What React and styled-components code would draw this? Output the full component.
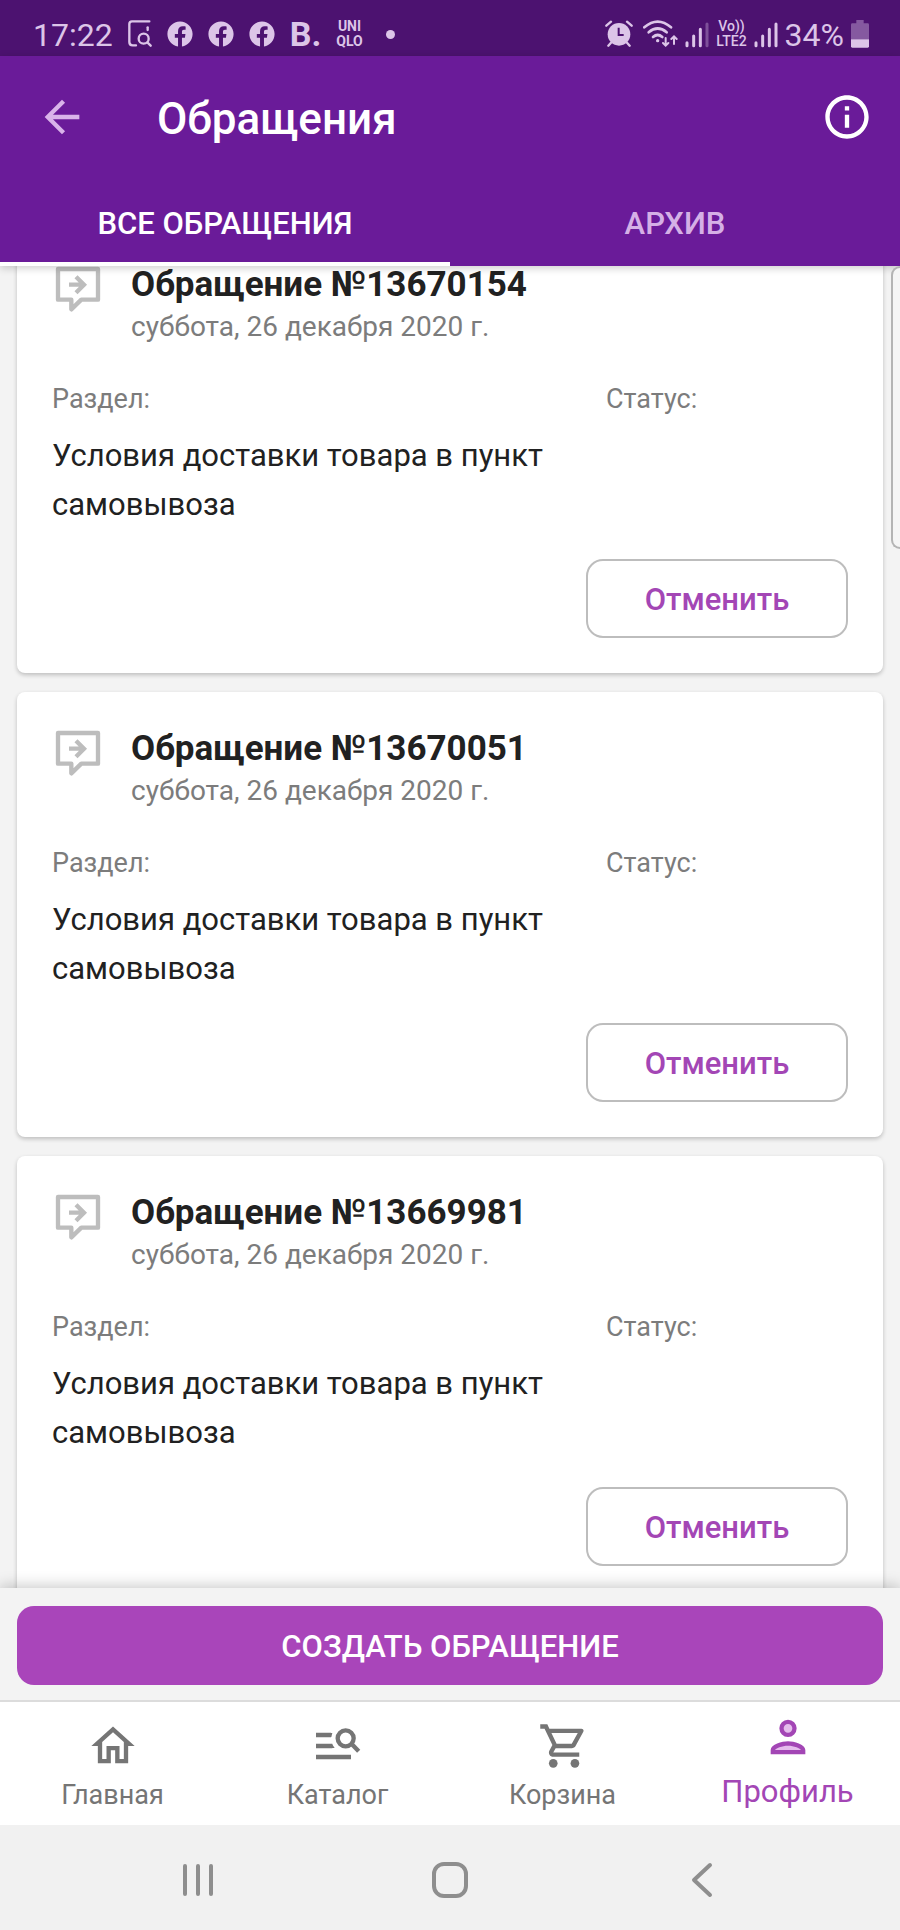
import React, { useLayoutEffect, useRef } from 'react';
import styled, { createGlobalStyle } from 'styled-components';
import { FaFacebook } from 'react-icons/fa';
import { MdArrowBack, MdOutlineInfo } from 'react-icons/md';

const requests = [
    { id: 13670154, date: 'суббота, 26 декабря 2020 г.', section: 'Условия доставки товара в пункт самовывоза' },
    { id: 13670051, date: 'суббота, 26 декабря 2020 г.', section: 'Условия доставки товара в пункт самовывоза' },
    { id: 13669981, date: 'суббота, 26 декабря 2020 г.', section: 'Условия доставки товара в пункт самовывоза' }
];

const SearchPageIcon = () => (
    <svg width="24" height="28" viewBox="0 0 72 84" fill="none" stroke="currentColor" strokeWidth="7" strokeLinecap="round">
        <path d="M64 4H12Q4 4 4 12V66Q4 76 14 76H24" />
        <path d="M59 22V30" />
        <circle cx="47" cy="56" r="15" />
        <path d="M58 67L68 77" />
    </svg>
);

const AlarmIcon = () => (
    <svg width="31" height="28" viewBox="0 0 93 84">
        <circle cx="42" cy="43" r="34" fill="currentColor" />
        <path d="M4 17L18 5M80 17L66 5M18 68L10 77M66 68L74 77" stroke="currentColor" strokeWidth="7" strokeLinecap="round" />
        <path d="M41 23V45H56" fill="none" stroke="#4c1270" strokeWidth="6" />
    </svg>
);

const WifiIcon = () => (
    <svg width="35" height="28" viewBox="0 0 105 84" fill="none" stroke="currentColor" strokeWidth="8" strokeLinecap="round">
        <path d="M4 22Q44 -12 84 22" />
        <path d="M17 37Q44 14 71 37" />
        <path d="M30 51Q44 39 58 51" />
        <circle cx="44" cy="62" r="3" fill="currentColor" strokeWidth="4" />
        <path d="M68 54V76M60 69L68 77L76 69M93 72V50M85 57L93 49L101 57" strokeWidth="6" />
    </svg>
);

const SignalIcon = ({ weak }) => (
    <svg width="24" height="28" viewBox="0 0 72 84" stroke="currentColor" strokeWidth="9" strokeLinecap="round">
        <path d="M6 68V77M26 48V77M46 28V77" />
        <path d="M66 12V77" opacity={weak ? 0.35 : 1} />
    </svg>
);

const BatteryIcon = () => (
    <svg width="18" height="28" viewBox="0 0 54 84" fill="currentColor">
        <path d="M16 0H38V10H50Q54 10 54 14V58H0V14Q0 10 4 10H16Z" opacity="0.4" />
        <path d="M0 58H54V79Q54 83 50 83H4Q0 83 0 79Z" />
    </svg>
);

const RequestIcon = () => (
    <svg width="52" height="52" viewBox="-12 -12 156 156" fill="none" stroke="#bdbdbd" strokeWidth="13" strokeLinecap="round" strokeLinejoin="round">
        <path d="M6 6H126V98H76L46 127V98H6Z" />
        <path d="M39 53H84M60 29L84 53L60 77" strokeLinecap="butt" strokeLinejoin="miter" />
    </svg>
);

const HomeIcon = () => (
    <svg width="52" height="52" viewBox="0 0 24 24" fill="currentColor">
        <path d="M12 5.69l5 4.5V18h-2v-6H9v6H7v-7.81l5-4.5M12 3L2 12h3v8h6v-6h2v6h6v-8h3L12 3z" />
    </svg>
);

const CatalogIcon = () => (
    <svg width="52" height="52" viewBox="0 0 156 156" fill="none" stroke="currentColor" strokeWidth="13">
        <path d="M12 45H57M12 78H61M12 111H117" />
        <path d="M57 39H61L58 51H55ZM60 72L68 84H58Z" fill="currentColor" stroke="none" />
        <circle cx="101" cy="55" r="24" />
        <path d="M117 70L140 94" />
    </svg>
);

const CartIcon = () => (
    <svg width="52" height="52" viewBox="-0.5 0 24 24" fill="currentColor">
        <path d="M15.55 13c.75 0 1.41-.41 1.75-1.03l3.58-6.49A.996.996 0 0020.01 4H5.21l-.94-2H1v2h2l3.6 7.59-1.35 2.44C4.52 15.37 5.48 17 7 17h12v-2H7l1.1-2h7.45zM6.16 6h12.15l-2.76 5H8.53L6.16 6z" />
        <circle cx="7" cy="20" r="2" />
        <circle cx="17" cy="20" r="2" />
    </svg>
);

const ProfileIcon = () => (
    <svg width="52" height="52" viewBox="0 0 24 24" fill="currentColor">
        <circle cx="12" cy="8" r="3" fill="#e5bdec" stroke="currentColor" strokeWidth="2" />
        <path d="M5 18.9V18C5 16.3 9.3 15 12 15S19 16.3 19 18V18.9Z" fill="#e5bdec" />
        <path d="M12 14c-2.67 0-8 1.34-8 4v2h16v-2c0-2.66-5.33-4-8-4zm6 4H6c.2-.72 3.3-2 6-2s5.8 1.29 6 2z" />
    </svg>
);

const RecentsIcon = () => (
    <svg width="36" height="36" viewBox="0 0 36 36" stroke="currentColor" strokeWidth="4" strokeLinecap="round">
        <path d="M5 4V32M18 4V32M31 4V32" />
    </svg>
);

const SquareIcon = () => (
    <svg width="36" height="36" viewBox="0 0 36 36" fill="none" stroke="currentColor" strokeWidth="4">
        <rect x="2" y="2" width="32" height="32" rx="10" />
    </svg>
);

const ChevronIcon = () => (
    <svg width="36" height="36" viewBox="0 0 36 36" fill="none" stroke="currentColor" strokeWidth="4" strokeLinecap="round" strokeLinejoin="round">
        <path d="M26 3L10 18L26 33" />
    </svg>
);

const navItems = [
    { label: 'Главная', icon: <HomeIcon /> },
    { label: 'Каталог', icon: <CatalogIcon /> },
    { label: 'Корзина', icon: <CartIcon /> },
    { label: 'Профиль', icon: <ProfileIcon />, active: true }
];

const RequestCard = ({ request }) => (
    <Card>
        <CardHeader>
            <RequestIcon />
            <CardHeading>
                <CardTitle>Обращение №{request.id}</CardTitle>
                <CardDate>{request.date}</CardDate>
            </CardHeading>
        </CardHeader>
        <Details>
            <div>
                <Label>Раздел:</Label>
                <Value>{request.section}</Value>
            </div>
            <Label>Статус:</Label>
        </Details>
        <CancelButton type="button">Отменить</CancelButton>
    </Card>
);

const App = () => {
    const listRef = useRef(null);

    // the list opens slightly scrolled, under the tabs
    useLayoutEffect(() => {
        listRef.current.scrollTop = 57;
    }, []);

    return (
        <Screen>
            <GlobalStyle />
            <StatusBar>
                <StatusGroup $gap={15}>
                    <Clock>17:22</Clock>
                    <SearchPageIcon />
                    <FaFacebook size={26} />
                    <FaFacebook size={26} />
                    <FaFacebook size={26} />
                    <Booking>B.</Booking>
                    <Uniqlo>
                        <span>UNI</span>
                        <span>QLO</span>
                    </Uniqlo>
                    <Dot />
                </StatusGroup>
                <StatusGroup $gap={7}>
                    <AlarmIcon />
                    <WifiIcon />
                    <SignalIcon weak />
                    <Volte>
                        <span>Vo))</span>
                        <span>LTE2</span>
                    </Volte>
                    <SignalIcon />
                    <Clock>34%</Clock>
                    <BatteryIcon />
                </StatusGroup>
            </StatusBar>
            <Header>
                <Toolbar>
                    <IconButton type="button" aria-label="Назад" $faded>
                        <MdArrowBack size={52} />
                    </IconButton>
                    <Title>Обращения</Title>
                    <IconButton type="button" aria-label="Информация">
                        <MdOutlineInfo size={52} />
                    </IconButton>
                </Toolbar>
                <Tabs role="tablist">
                    <Tab type="button" role="tab" aria-selected="true" $active>ВСЕ ОБРАЩЕНИЯ</Tab>
                    <Tab type="button" role="tab" aria-selected="false">АРХИВ</Tab>
                </Tabs>
                <EdgeHandle />
            </Header>
            <List ref={listRef}>
                {
                    requests.map(request =>
                        <RequestCard key={request.id} request={request} />
                    )
                }
            </List>
            <Footer>
                <CreateButton type="button">СОЗДАТЬ ОБРАЩЕНИЕ</CreateButton>
            </Footer>
            <BottomNav>
                {
                    navItems.map(item =>
                        <NavLink key={item.label} href="#" $active={item.active}>
                            {item.icon}
                            <span>{item.label}</span>
                        </NavLink>
                    )
                }
            </BottomNav>
            <SystemNav>
                <SystemButton type="button" aria-label="Недавние"><RecentsIcon /></SystemButton>
                <SystemButton type="button" aria-label="Домой"><SquareIcon /></SystemButton>
                <SystemButton type="button" aria-label="Назад"><ChevronIcon /></SystemButton>
            </SystemNav>
        </Screen>
    )
}

export default App;


const GlobalStyle = createGlobalStyle`
* {
    box-sizing: border-box;
}
body {
    margin: 0;
    background: #f3f3f3;
    font-family: Roboto, sans-serif;
}
button {
    padding: 0;
    border: 0;
    background: none;
    color: inherit;
    font-family: inherit;
    cursor: pointer;
}
svg {
    display: block;
    flex: none;
}
`

const Screen = styled.div`
    height: 100vh;
    display: flex;
    flex-direction: column;
    overflow: hidden;
`

const StatusBar = styled.div`
    flex: none;
    height: 56px;
    padding: 12px 31px 0 33px;
    display: flex;
    justify-content: space-between;
    background: #4c1270;
    color: #dcc5e8;
`

const StatusGroup = styled.div`
    display: flex;
    align-items: center;
    gap: ${({ $gap }) => $gap}px;
`

const Clock = styled.span`
    padding-top: 2px;
    font-size: 32px;
    line-height: 42px;
`

const Booking = styled.span`
    font-size: 34px;
    line-height: 42px;
    font-weight: 700;
`

const Uniqlo = styled.span`
    display: flex;
    flex-direction: column;
    align-items: center;
    font-size: 14px;
    line-height: 15px;
    font-weight: 700;
`

const Volte = styled(Uniqlo)`
    font-weight: 500;
`

const Dot = styled.span`
    width: 9px;
    height: 9px;
    margin-left: 8px;
    border-radius: 50%;
    background: currentColor;
`

const Header = styled.header`
    position: relative;
    z-index: 1;
    flex: none;
    background: #6a1b99;
    color: #fff;
    box-shadow: 0 2px 8px rgba(0, 0, 0, 0.2);
`

const Toolbar = styled.div`
    height: 122px;
    padding: 0 27px 0 36px;
    display: flex;
    align-items: center;
`

const IconButton = styled.button`
    color: ${({ $faded }) => $faded ? '#d9b3ea' : '#fff'};
`

const Title = styled.h1`
    flex: 1;
    margin: 0 0 0 69px;
    padding-top: 4px;
    font-size: 44px;
    line-height: 52px;
    font-weight: 500;
`

const Tabs = styled.div`
    display: grid;
    grid-template-columns: 1fr 1fr;
`

const Tab = styled.button`
    height: 88px;
    padding-top: 2px;
    font-size: 31px;
    font-weight: 500;
    color: ${({ $active }) => $active ? '#fff' : '#d5b0e6'};
    box-shadow: ${({ $active }) => $active ? 'inset 0 -4px #fff' : 'none'};
`

const EdgeHandle = styled.div`
    position: absolute;
    top: 100%;
    right: 0;
    width: 9px;
    height: 283px;
    border: 2px solid #b4b4b4;
    border-right: 0;
    border-radius: 9px 0 0 9px;
    background: #f5f5f5;
`

const List = styled.main`
    flex: 1;
    min-height: 0;
    padding: 19px 17px;
    display: flex;
    flex-direction: column;
    gap: 19px;
    overflow-y: auto;
    scrollbar-width: none;
`

const Card = styled.article`
    flex: none;
    padding: 35px;
    display: flex;
    flex-direction: column;
    border-radius: 8px;
    background: #fff;
    box-shadow: 0 2px 4px rgba(0, 0, 0, 0.22);
`

const CardHeader = styled.div`
    display: flex;
    gap: 27px;
`

const CardHeading = styled.div`
    padding-top: 1px;
`

const CardTitle = styled.h2`
    margin: 0;
    font-size: 35px;
    line-height: 42px;
    font-weight: 700;
    color: #212121;
`

const CardDate = styled.div`
    font-size: 28px;
    line-height: 42px;
    color: #7c7c7c;
`

const Details = styled.div`
    margin-top: 35px;
    display: grid;
    grid-template-columns: 1fr 242px;
`

const Label = styled.div`
    font-size: 27px;
    line-height: 32px;
    color: #7c7c7c;
`

const Value = styled.p`
    margin: 16px 0 0;
    font-size: 31px;
    line-height: 49px;
    color: #212121;
`

const CancelButton = styled.button`
    align-self: flex-end;
    width: 262px;
    height: 79px;
    margin-top: 30px;
    padding-top: 2px;
    border: 2px solid #bdbdbd;
    border-radius: 17px;
    font-size: 31px;
    font-weight: 500;
    color: #a346b5;
`

const Footer = styled.div`
    position: relative;
    flex: none;
    padding: 18px 17px 15px;
    border-bottom: 2px solid #dcdcdc;
    background: #f3f3f3;
    box-shadow: 0 -2px 14px rgba(0, 0, 0, 0.22);
`

const CreateButton = styled.button`
    display: block;
    width: 100%;
    height: 79px;
    padding-top: 2px;
    border-radius: 17px;
    background: #a945ba;
    font-size: 31px;
    font-weight: 500;
    color: #fff;
`

const BottomNav = styled.nav`
    position: relative;
    flex: none;
    height: 123px;
    display: grid;
    grid-template-columns: repeat(4, 1fr);
    background: #fff;
`

const NavLink = styled.a`
    padding-bottom: 14px;
    display: flex;
    flex-direction: column;
    align-items: center;
    justify-content: flex-end;
    gap: ${({ $active }) => $active ? 10 : 7}px;
    font-size: ${({ $active }) => $active ? 31 : 27}px;
    line-height: ${({ $active }) => $active ? 38 : 32}px;
    color: ${({ $active }) => $active ? '#a346b5' : '#757575'};
    text-decoration: none;
`

const SystemNav = styled.div`
    flex: none;
    height: 105px;
    padding: 4px 8% 0;
    display: grid;
    grid-template-columns: repeat(3, 1fr);
    background: #f1f1f1;
`

const SystemButton = styled.button`
    display: flex;
    align-items: center;
    justify-content: center;
    color: #8e8e8e;
`
